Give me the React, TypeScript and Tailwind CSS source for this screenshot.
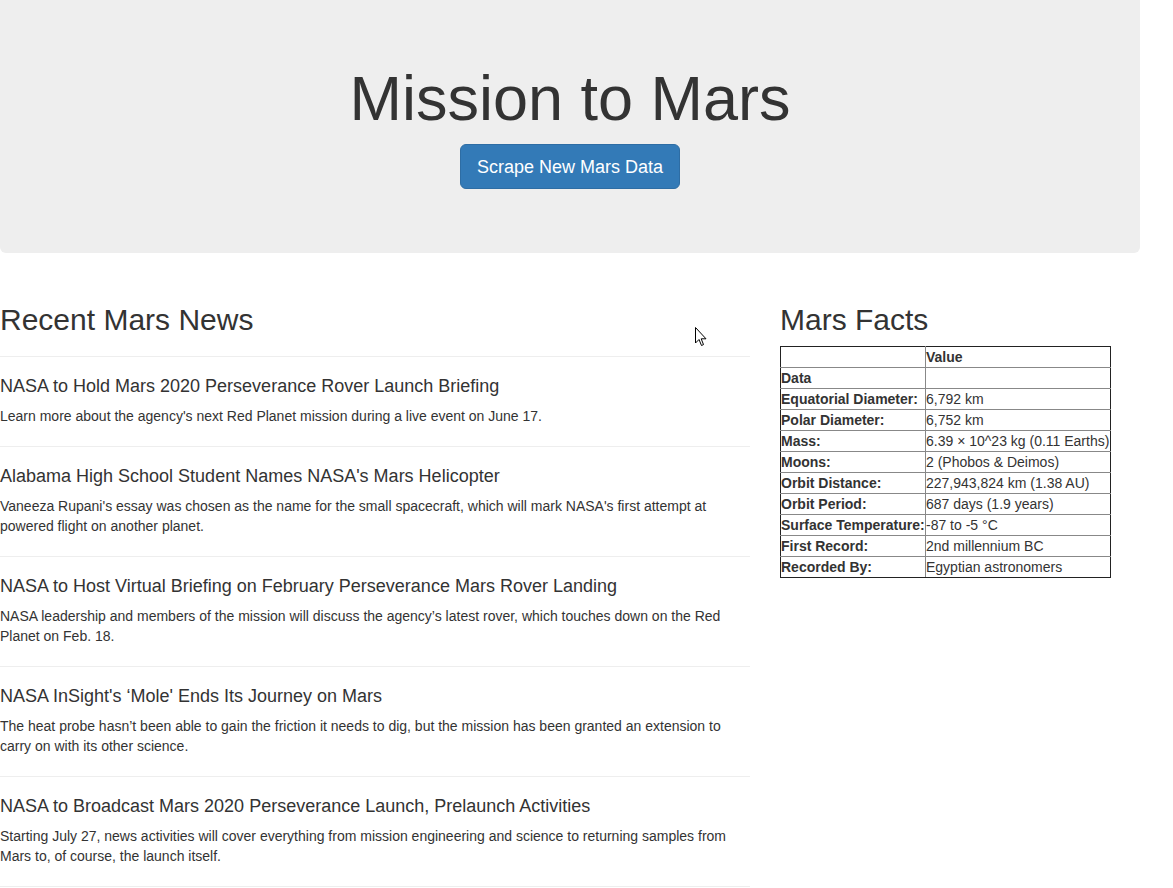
import React from 'react'

const news = [
  {
    title: 'NASA to Hold Mars 2020 Perseverance Rover Launch Briefing',
    body: "Learn more about the agency's next Red Planet mission during a live event on June 17.",
  },
  {
    title: "Alabama High School Student Names NASA's Mars Helicopter",
    body: "Vaneeza Rupani's essay was chosen as the name for the small spacecraft, which will mark NASA's first attempt at powered flight on another planet.",
  },
  {
    title: 'NASA to Host Virtual Briefing on February Perseverance Mars Rover Landing',
    body: 'NASA leadership and members of the mission will discuss the agency’s latest rover, which touches down on the Red Planet on Feb. 18.',
  },
  {
    title: "NASA InSight's ‘Mole' Ends Its Journey on Mars",
    body: 'The heat probe hasn’t been able to gain the friction it needs to dig, but the mission has been granted an extension to carry on with its other science.',
  },
  {
    title: 'NASA to Broadcast Mars 2020 Perseverance Launch, Prelaunch Activities',
    body: 'Starting July 27, news activities will cover everything from mission engineering and science to returning samples from Mars to, of course, the launch itself.',
  },
]

const facts = [
  ['Equatorial Diameter:', '6,792 km'],
  ['Polar Diameter:', '6,752 km'],
  ['Mass:', '6.39 × 10^23 kg (0.11 Earths)'],
  ['Moons:', '2 (Phobos & Deimos)'],
  ['Orbit Distance:', '227,943,824 km (1.38 AU)'],
  ['Orbit Period:', '687 days (1.9 years)'],
  ['Surface Temperature:', '-87 to -5 °C'],
  ['First Record:', '2nd millennium BC'],
  ['Recorded By:', 'Egyptian astronomers'],
]

function Cursor() {
  return (
    <svg className="absolute left-[695px] top-[327px]" width="13" height="20" viewBox="0 0 13 20">
      <path
        d="M0.5 0.5 L0.5 16 L4 12.5 L6.5 18.5 L8.5 17.6 L6.2 11.8 L11 11.8 Z"
        fill="#fff"
        stroke="#000"
        strokeWidth="1"
        strokeLinejoin="miter"
      />
    </svg>
  )
}

export default function App() {
  return (
    <div className="relative min-h-[888px] bg-white text-[#333] font-['Liberation_Sans',Arial,sans-serif] text-[14px] leading-5">
      {/* Jumbotron */}
      <div className="w-[1140px] bg-[#eee] rounded-b-[6px] pt-[64px] pb-[64px] flex flex-col items-center">
        <h1 className="text-[63px] leading-[69px] font-normal mb-[11px]">Mission to Mars</h1>
        <button className="h-[45px] px-4 bg-[#337ab7] border border-[#2e6da4] rounded-[6px] text-white text-[18px] leading-6">
          Scrape New Mars Data
        </button>
      </div>

      <div className="flex mt-[50px]">
        {/* News column */}
        <div className="w-[750px] mr-[30px]">
          <h2 className="text-[30px] leading-[33px] font-normal mb-[20px]">Recent Mars News</h2>
          <div className="border-b border-[#eee]">
            {news.map((n) => (
              <div key={n.title} className="border-t border-[#eee] pt-5 pb-5">
                <h4 className="text-[18px] leading-[19px] font-normal mb-[10px]">{n.title}</h4>
                <p className="leading-5">{n.body}</p>
              </div>
            ))}
          </div>
        </div>

        {/* Facts column */}
        <div>
          <h2 className="text-[30px] leading-[33px] font-normal mb-[10px]">Mars Facts</h2>
          <table className="border-collapse border border-[#222] w-[331px]">
            <thead>
              <tr>
                <th className="border border-[#888] border-l-[#222] border-t-[#222] p-0 text-left font-bold h-[21px] w-[145px]"></th>
                <th className="border border-[#888] border-t-[#222] border-r-[#222] p-0 text-left font-bold h-[21px]">Value</th>
              </tr>
            </thead>
            <tbody>
              <tr>
                <th className="border border-[#888] border-l-[#222] p-0 text-left font-bold h-[21px]">Data</th>
                <td className="border border-[#888] border-r-[#222] p-0 h-[21px]"></td>
              </tr>
              {facts.map(([k, v], i) => (
                <tr key={k}>
                  <th
                    className={`border border-[#888] border-l-[#222] p-0 text-left font-bold h-[21px] whitespace-nowrap ${
                      i === facts.length - 1 ? 'border-b-[#222]' : ''
                    }`}
                  >
                    {k}
                  </th>
                  <td
                    className={`border border-[#888] border-r-[#222] p-0 h-[21px] whitespace-nowrap ${
                      i === facts.length - 1 ? 'border-b-[#222]' : ''
                    }`}
                  >
                    {v}
                  </td>
                </tr>
              ))}
            </tbody>
          </table>
        </div>
      </div>

      <Cursor />
    </div>
  )
}
